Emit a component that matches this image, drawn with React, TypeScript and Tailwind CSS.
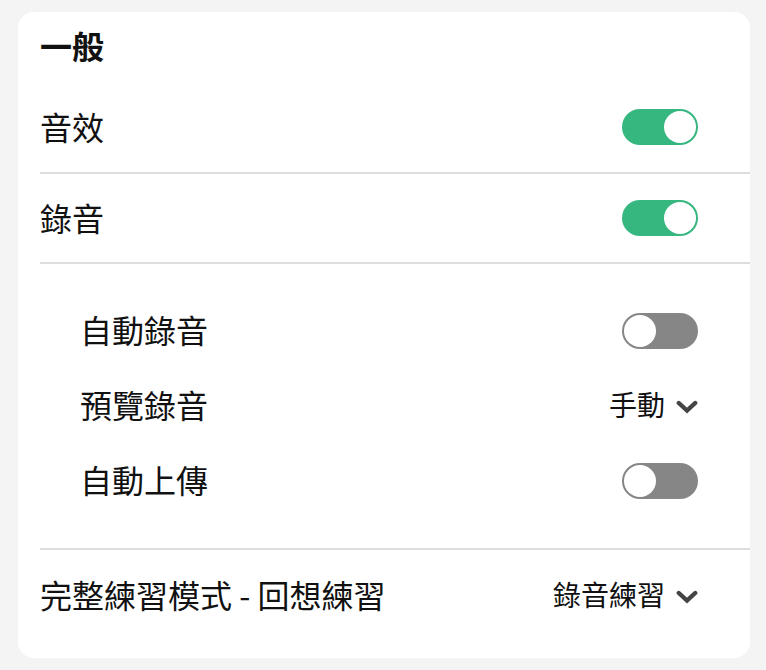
import { useState } from 'react'

const font = { fontFamily: '"Noto Sans CJK TC", "Noto Sans", sans-serif' }

const Toggle = ({ on, onChange }: { on: boolean; onChange: () => void }) => (
    <button
        onClick={onChange}
        className={`flex h-9 w-[76px] items-center rounded-full p-[2px] ${on ? 'bg-[#35b77f] justify-end' : 'bg-[#868686] justify-start'}`}
    >
        <span className="block size-8 rounded-full bg-white" />
    </button>
)

const Chevron = () => (
    <svg width="22" height="14" viewBox="0 0 22 14" className="ml-[11px] mt-[6px]">
        <path d="M2.8 3 L11 10.5 L19.2 3" fill="none" stroke="#444444" strokeWidth="4.4" strokeLinecap="round" strokeLinejoin="miter" />
    </svg>
)

const Divider = () => <div className="ml-[22px] h-[2px] bg-[#dedede]" />

export default function App() {
    const [sound, setSound] = useState(true)
    const [record, setRecord] = useState(true)
    const [autoRecord, setAutoRecord] = useState(false)
    const [autoUpload, setAutoUpload] = useState(false)

    return (
        <div className="min-h-[670px] bg-[#f4f4f4] pt-3 pb-3 pl-[18px] pr-4 text-[#111111]" style={font}>
            <div className="rounded-2xl bg-white pb-[18px]">
                <div className="flex h-[70px] items-center pl-[22px] pb-1 text-[32px] font-bold">一般</div>

                <div className="flex h-[90px] items-center justify-between pl-[22px] pr-[52px]">
                    <div className="mb-[3px] text-[32px]">音效</div>
                    <Toggle on={sound} onChange={() => setSound(!sound)} />
                </div>
                <Divider />

                <div className="flex h-[88px] items-center justify-between pl-[22px] pr-[52px]">
                    <div className="mb-[3px] text-[32px]">錄音</div>
                    <Toggle on={record} onChange={() => setRecord(!record)} />
                </div>
                <Divider />

                <div className="flex flex-col pt-[29px] pb-[30px] pl-[62px] pr-[52px]">
                    <div className="flex h-[75px] items-center justify-between">
                        <div className="mb-[3px] text-[32px]">自動錄音</div>
                        <Toggle on={autoRecord} onChange={() => setAutoRecord(!autoRecord)} />
                    </div>
                    <div className="flex h-[75px] items-center justify-between">
                        <div className="mb-[3px] text-[32px]">預覽錄音</div>
                        <div className="mb-[3px] flex items-center text-[28px]">
                            手動
                            <Chevron />
                        </div>
                    </div>
                    <div className="flex h-[75px] items-center justify-between">
                        <div className="mb-[3px] text-[32px]">自動上傳</div>
                        <Toggle on={autoUpload} onChange={() => setAutoUpload(!autoUpload)} />
                    </div>
                </div>
                <Divider />

                <div className="flex h-[90px] items-center justify-between pl-[22px] pr-[52px]">
                    <div className="mb-[3px] text-[32px]">完整練習模式 - 回想練習</div>
                    <div className="mb-[3px] flex items-center text-[28px]">
                        錄音練習
                        <Chevron />
                    </div>
                </div>
            </div>
        </div>
    )
}
